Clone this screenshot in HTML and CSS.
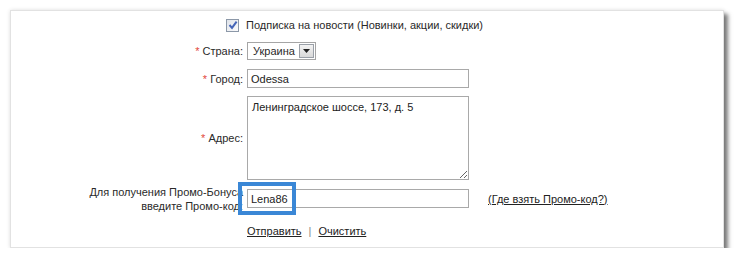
FILE: index.html
```html
<!DOCTYPE html>
<html lang="ru">
<head>
  <meta charset="UTF-8" />
  <title>Регистрация</title>
  <link rel="stylesheet" href="styles.css">
</head>
<body>

  <!-- форма -->
  <div class="form-card">

    <div class="form-row row-news">
      <div class="label"></div>
      <div class="field">
        <span class="checkbox">
          <svg width="10" height="10" viewBox="0 0 10 10"><path d="M1.5 5 L4 7.8 L8.6 1.6" fill="none" stroke="#4565b8" stroke-width="2"/></svg>
        </span>
        <span class="check-text">Подписка на новости (Новинки, акции, скидки)</span>
      </div>
    </div>

    <div class="form-row row-country">
      <div class="label"><span class="req">*</span> Страна:</div>
      <div class="field">
        <div class="select-box">
          <span class="select-value">Украина</span>
          <span class="select-btn">
            <svg width="7" height="4" viewBox="0 0 7 4"><path d="M0 0 H7 L3.5 4 Z" fill="#222"/></svg>
          </span>
        </div>
      </div>
    </div>

    <div class="form-row row-city">
      <div class="label"><span class="req">*</span> Город:</div>
      <div class="field">
        <input class="text-input" type="text" value="Odessa">
      </div>
    </div>

    <div class="form-row row-address">
      <div class="label"><span class="req">*</span> Адрес:</div>
      <div class="field">
        <textarea class="text-area">Ленинградское шоссе, 173, д. 5</textarea>
      </div>
    </div>

    <div class="form-row row-promo">
      <div class="label label-two">Для получения Промо-Бонуса<br>введите Промо-код:</div>
      <div class="field">
        <div class="promo-wrap">
          <input class="text-input" type="text" value="Lena86">
          <span class="promo-mark"></span>
        </div>
        <a href="#" class="promo-help">(Где взять Промо-код?)</a>
      </div>
    </div>

    <div class="form-row row-actions">
      <div class="label"></div>
      <div class="field">
        <a href="#" class="action-link">Отправить</a>
        <span class="sep">|</span>
        <a href="#" class="action-link">Очистить</a>
      </div>
    </div>

  </div>

</body>
</html>
```

FILE: styles.css
```css
body {
  margin: 0;
  background-color: #fff;
  font-family: "Liberation Sans", Arial, sans-serif;
  font-size: 11px;
  color: #2a2a2a;
}

.form-card {
  margin: 10px 0 0 10px;
  width: 712px;
  height: 236px;
  border: 1px solid #e2e2e2;
  background-color: #fff;
  box-shadow: 4px 4px 4px rgba(0, 0, 0, 0.5), 0 0 4px rgba(0, 0, 0, 0.12);
}

.form-row {
  display: flex;
  align-items: center;
}

.label {
  width: 232px;
  margin-right: 4px;
  text-align: right;
  flex-shrink: 0;
}

.label-two {
  line-height: 14px;
}

.req {
  color: #e2483c;
}

.field {
  display: flex;
  align-items: center;
}

.row-news {
  margin-top: 8px;
  height: 12px;
}

.row-news .field {
  margin-left: -21px;
}

.checkbox {
  width: 11px;
  height: 11px;
  border: 1px solid #8c98a8;
  background: linear-gradient(135deg, #dfe3ea, #fbfbfc);
  display: flex;
  align-items: center;
  justify-content: center;
  margin-right: 7px;
}

.row-country {
  margin-top: 11px;
  height: 18px;
}

.select-box {
  display: flex;
  align-items: center;
  height: 16px;
  border: 1px solid #a5a5a5;
  padding: 0 1px 0 5px;
}

.select-value {
  margin-right: 4px;
}

.select-btn {
  width: 13px;
  height: 12px;
  border: 1px solid #9aa0a8;
  background: linear-gradient(#f3f3f3, #d9d9d9);
  display: flex;
  align-items: center;
  justify-content: center;
}

.row-city {
  margin-top: 9px;
  height: 19px;
}

.text-input {
  width: 222px;
  height: 19px;
  box-sizing: border-box;
  border: 1px solid #a9a9a9;
  padding: 0 3px;
  font-family: inherit;
  font-size: 11px;
  color: #222;
  outline: none;
}

.row-address {
  margin-top: 8px;
}

.text-area {
  width: 222px;
  height: 84px;
  box-sizing: border-box;
  border: 1px solid #a9a9a9;
  padding: 4px 4px;
  font-family: inherit;
  font-size: 11px;
  color: #222;
  margin: 0;
  outline: none;
}

.row-promo {
  margin-top: 9px;
  height: 19px;
}

.promo-wrap {
  position: relative;
  display: flex;
}

.promo-mark {
  position: absolute;
  left: -9px;
  top: -7px;
  width: 58px;
  height: 33px;
  border: 4px solid #3a87d6;
  box-sizing: border-box;
}

.promo-help {
  margin-left: 19px;
  color: #222;
}

.row-actions {
  margin-top: 16px;
  height: 14px;
}

.action-link {
  color: #222;
}

.sep {
  color: #888;
  margin: 0 7px;
}
```
